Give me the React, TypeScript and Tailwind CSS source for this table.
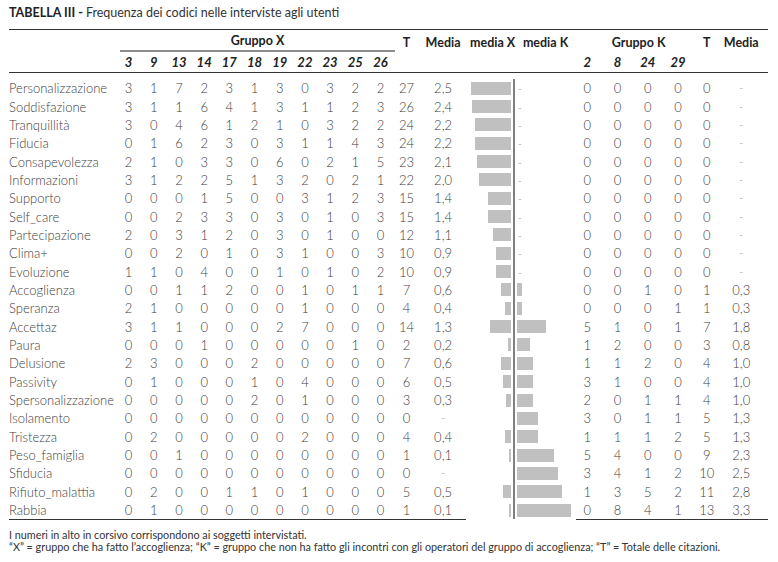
import React from 'react';

type Row = {
  label: string;
  x: number[];
  t: number;
  media: string;
  k: number[];
  tk: number;
  mediaK: string;
};

const ROWS: Row[] = [
  { label: 'Personalizzazione', x: [3, 1, 7, 2, 3, 1, 3, 0, 3, 2, 2], t: 27, media: '2,5', k: [0, 0, 0, 0], tk: 0, mediaK: '-' },
  { label: 'Soddisfazione', x: [3, 1, 1, 6, 4, 1, 3, 1, 1, 2, 3], t: 26, media: '2,4', k: [0, 0, 0, 0], tk: 0, mediaK: '-' },
  { label: 'Tranquillità', x: [3, 0, 4, 6, 1, 2, 1, 0, 3, 2, 2], t: 24, media: '2,2', k: [0, 0, 0, 0], tk: 0, mediaK: '-' },
  { label: 'Fiducia', x: [0, 1, 6, 2, 3, 0, 3, 1, 1, 4, 3], t: 24, media: '2,2', k: [0, 0, 0, 0], tk: 0, mediaK: '-' },
  { label: 'Consapevolezza', x: [2, 1, 0, 3, 3, 0, 6, 0, 2, 1, 5], t: 23, media: '2,1', k: [0, 0, 0, 0], tk: 0, mediaK: '-' },
  { label: 'Informazioni', x: [3, 1, 2, 2, 5, 1, 3, 2, 0, 2, 1], t: 22, media: '2,0', k: [0, 0, 0, 0], tk: 0, mediaK: '-' },
  { label: 'Supporto', x: [0, 0, 0, 1, 5, 0, 0, 3, 1, 2, 3], t: 15, media: '1,4', k: [0, 0, 0, 0], tk: 0, mediaK: '-' },
  { label: 'Self_care', x: [0, 0, 2, 3, 3, 0, 3, 0, 1, 0, 3], t: 15, media: '1,4', k: [0, 0, 0, 0], tk: 0, mediaK: '-' },
  { label: 'Partecipazione', x: [2, 0, 3, 1, 2, 0, 3, 0, 1, 0, 0], t: 12, media: '1,1', k: [0, 0, 0, 0], tk: 0, mediaK: '-' },
  { label: 'Clima+', x: [0, 0, 2, 0, 1, 0, 3, 1, 0, 0, 3], t: 10, media: '0,9', k: [0, 0, 0, 0], tk: 0, mediaK: '-' },
  { label: 'Evoluzione', x: [1, 1, 0, 4, 0, 0, 1, 0, 1, 0, 2], t: 10, media: '0,9', k: [0, 0, 0, 0], tk: 0, mediaK: '-' },
  { label: 'Accoglienza', x: [0, 0, 1, 1, 2, 0, 0, 1, 0, 1, 1], t: 7, media: '0,6', k: [0, 0, 1, 0], tk: 1, mediaK: '0,3' },
  { label: 'Speranza', x: [2, 1, 0, 0, 0, 0, 0, 1, 0, 0, 0], t: 4, media: '0,4', k: [0, 0, 0, 1], tk: 1, mediaK: '0,3' },
  { label: 'Accettaz', x: [3, 1, 1, 0, 0, 0, 2, 7, 0, 0, 0], t: 14, media: '1,3', k: [5, 1, 0, 1], tk: 7, mediaK: '1,8' },
  { label: 'Paura', x: [0, 0, 0, 1, 0, 0, 0, 0, 0, 1, 0], t: 2, media: '0,2', k: [1, 2, 0, 0], tk: 3, mediaK: '0,8' },
  { label: 'Delusione', x: [2, 3, 0, 0, 0, 2, 0, 0, 0, 0, 0], t: 7, media: '0,6', k: [1, 1, 2, 0], tk: 4, mediaK: '1,0' },
  { label: 'Passivity', x: [0, 1, 0, 0, 0, 1, 0, 4, 0, 0, 0], t: 6, media: '0,5', k: [3, 1, 0, 0], tk: 4, mediaK: '1,0' },
  { label: 'Spersonalizzazione', x: [0, 0, 0, 0, 0, 2, 0, 1, 0, 0, 0], t: 3, media: '0,3', k: [2, 0, 1, 1], tk: 4, mediaK: '1,0' },
  { label: 'Isolamento', x: [0, 0, 0, 0, 0, 0, 0, 0, 0, 0, 0], t: 0, media: '-', k: [3, 0, 1, 1], tk: 5, mediaK: '1,3' },
  { label: 'Tristezza', x: [0, 2, 0, 0, 0, 0, 0, 2, 0, 0, 0], t: 4, media: '0,4', k: [1, 1, 1, 2], tk: 5, mediaK: '1,3' },
  { label: 'Peso_famiglia', x: [0, 0, 1, 0, 0, 0, 0, 0, 0, 0, 0], t: 1, media: '0,1', k: [5, 4, 0, 0], tk: 9, mediaK: '2,3' },
  { label: 'Sfiducia', x: [0, 0, 0, 0, 0, 0, 0, 0, 0, 0, 0], t: 0, media: '-', k: [3, 4, 1, 2], tk: 10, mediaK: '2,5' },
  { label: 'Rifiuto_malattia', x: [0, 2, 0, 0, 1, 1, 0, 1, 0, 0, 0], t: 5, media: '0,5', k: [1, 3, 5, 2], tk: 11, mediaK: '2,8' },
  { label: 'Rabbia', x: [0, 1, 0, 0, 0, 0, 0, 0, 0, 0, 0], t: 1, media: '0,1', k: [0, 8, 4, 1], tk: 13, mediaK: '3,3' },
];

const X_IDS = [3, 9, 13, 14, 17, 18, 19, 22, 23, 25, 26];
const K_IDS = [2, 8, 24, 29];
const UNIT = 16.2;

const GRID =
  'grid grid-cols-[107px_repeat(11,25.2px)_27px_46px_47px_59px_repeat(4,30.3px)_27px_42px]';

const num = (s: string) => (s === '-' ? 0 : parseFloat(s.replace(',', '.')));

function DataRow({ row }: { row: Row }) {
  const mx = num(row.media);
  const mk = num(row.mediaK);
  return (
    <div className={`${GRID} h-[18.35px] items-center`}>
      <div className="whitespace-nowrap">{row.label}</div>
      {row.x.map((v, i) => (
        <div key={i} className="text-center">
          {v}
        </div>
      ))}
      <div className="text-center">{row.t}</div>
      <div className={row.media === '-' ? 'text-center text-[#aaa]' : 'text-center'}>
        {row.media}
      </div>

      {/* media X bar, grows left from the axis */}
      <div className="flex h-full items-center justify-end pr-[2px]">
        {mx > 0 && (
          <div className="h-[13px] bg-[#c0c0c0]" style={{ width: mx * UNIT }} />
        )}
      </div>
      {/* media K bar, grows right from the axis */}
      <div className="flex h-full items-center border-l-2 border-[#808080] pl-[2px]">
        {mk > 0 ? (
          <div className="h-[13px] bg-[#c0c0c0]" style={{ width: mk * UNIT }} />
        ) : (
          <span className="pl-[1px] text-[10px] text-[#555]">-</span>
        )}
      </div>

      {row.k.map((v, i) => (
        <div key={i} className="text-center">
          {v}
        </div>
      ))}
      <div className="text-center">{row.tk}</div>
      <div className={row.mediaK === '-' ? 'text-center text-[#aaa]' : 'text-center'}>
        {row.mediaK}
      </div>
    </div>
  );
}

export default function App() {
  return (
    <div className="min-h-[562px] w-[778px] bg-white pl-[9px] pt-[5px] font-['Lato','Open_Sans',sans-serif] text-[13px] leading-[16px] text-[#404040]">
      <div className="h-[16px] text-[12.5px] leading-[16px] text-[#333]">
        <span className="font-bold text-[#222]">TABELLA III - </span>
        Frequenza dei codici nelle interviste agli utenti
      </div>

      <div className="mt-[8px] w-[759px] border-t border-[#333]">
        {/* header row 1 */}
        <div className={`${GRID} h-[22px] items-end pb-[1px] text-[12.5px] font-bold text-[#222]`}>
          <div />
          <div className="col-span-11 ml-[4px] -mr-[2px] -mb-[1px] flex h-full items-end justify-center border-b-2 border-[#8c8c8c] pb-[1px]">
            Gruppo X
          </div>
          <div className="text-center">T</div>
          <div className="text-center">Media</div>
          <div className="whitespace-nowrap pl-[4px] text-center">media X</div>
          <div className="whitespace-nowrap pl-[6px] text-center">media K</div>
          <div className="col-span-4 pl-[12px] text-center">Gruppo K</div>
          <div className="text-center">T</div>
          <div className="text-center">Media</div>
        </div>

        {/* header row 2 */}
        <div className={`${GRID} h-[21px] items-center border-b border-[#333] font-bold italic text-[#222]`}>
          <div />
          {X_IDS.map((id) => (
            <div key={id} className="text-center">
              {id}
            </div>
          ))}
          <div />
          <div />
          <div />
          <div />
          {K_IDS.map((id) => (
            <div key={id} className="text-center">
              {id}
            </div>
          ))}
          <div />
          <div />
        </div>

        <div className="pt-[6px] font-light">
          {ROWS.map((row) => (
            <DataRow key={row.label} row={row} />
          ))}
        </div>

        {/* bottom rule, interrupted under the chart */}
        <div className="flex h-px">
          <div className="w-[457px] bg-[#333]" />
          <div className="w-[110px]" />
          <div className="flex-1 bg-[#333]" />
        </div>
      </div>

      <div className="mt-[9px] text-[10.8px] leading-[12px] text-[#333]">
        <div>I numeri in alto in corsivo corrispondono ai soggetti intervistati.</div>
        <div>
          “X” = gruppo che ha fatto l’accoglienza; “K” = gruppo che non ha fatto gli incontri con gli operatori del gruppo di accoglienza; “T” = Totale delle citazioni.
        </div>
      </div>
    </div>
  );
}
